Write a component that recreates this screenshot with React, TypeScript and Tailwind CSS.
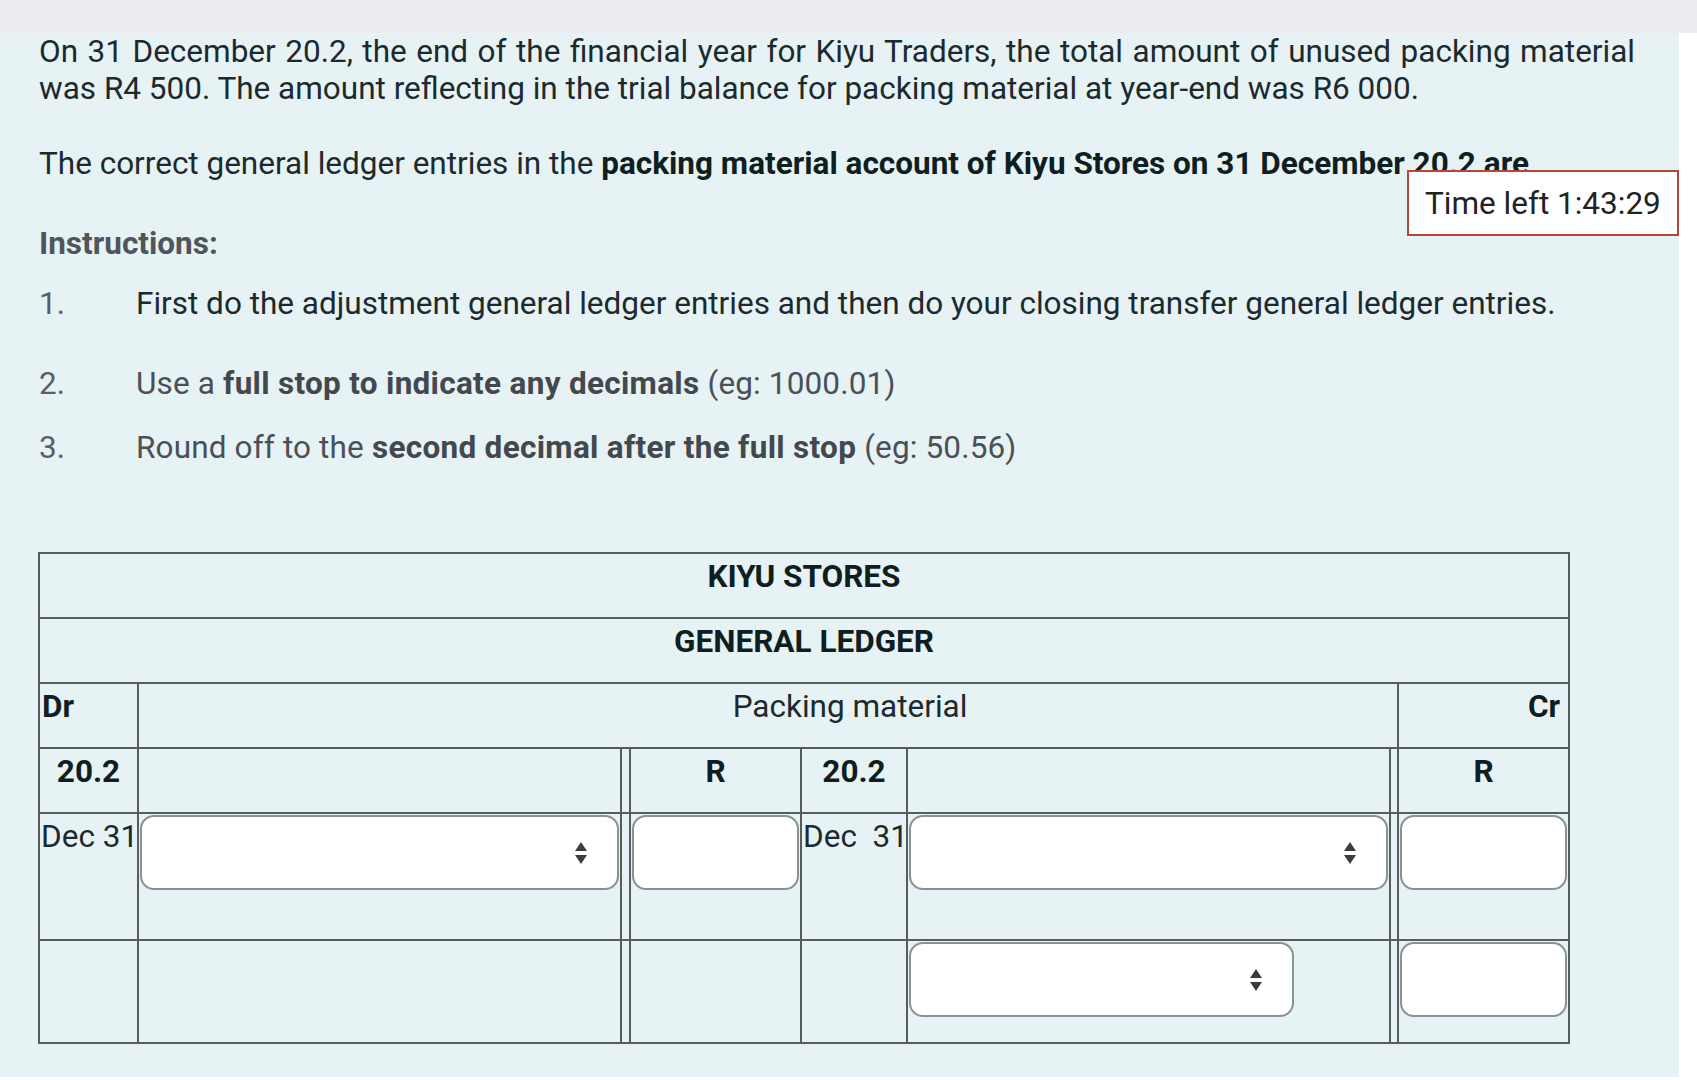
import React from 'react';

const Arrows: React.FC = () => (
  <svg
    width="12"
    height="22"
    viewBox="0 0 12 22"
    className="pointer-events-none absolute right-[32px] top-1/2 -translate-y-1/2"
  >
    <path d="M6 0 L12 9 H0 Z" fill="#3a3e41" />
    <path d="M0 13 H12 L6 22 Z" fill="#3a3e41" />
  </svg>
);

const Dropdown: React.FC<{ className?: string }> = ({ className = '' }) => (
  <div className={`relative h-[75px] ${className}`}>
    <select className="h-full w-full appearance-none rounded-[14px] border-2 border-[#8c9194] bg-white" />
    <Arrows />
  </div>
);

const Amount: React.FC = () => (
  <input
    type="text"
    className="block h-[75px] w-full rounded-[14px] border-2 border-[#8c9194] bg-white"
  />
);

const cell = 'border-2 border-[#575c5f] align-top';

const App: React.FC = () => {
  return (
    <div className="h-[1080px] w-full overflow-hidden bg-white font-['Roboto',sans-serif] text-[31.5px] leading-[37px] text-[#1d2a2d]">
      {/* top bar */}
      <div className="h-[33px] bg-[#ececf0]" />

      <div className="relative h-[1044px] w-[1679px] bg-[#e6f2f4] pl-[39px] pr-[44px]">
        <p className="text-justify">
          On 31 December 20.2, the end of the financial year for Kiyu Traders, the total amount of unused packing material
          was R4 500. The amount reflecting in the trial balance for packing material at year-end was R6 000.
        </p>

        <p className="mt-[38px] whitespace-nowrap">
          The correct general ledger entries in the{' '}
          <span className="font-bold text-[#0f1e21]">packing material account of Kiyu Stores on 31 December 20.2 are</span>
        </p>

        {/* timer */}
        <div className="absolute right-0 top-[137px] flex h-[66px] w-[272px] items-center border-2 border-[#b4463a] bg-white pl-[16px] text-[#222]">
          Time left 1:43:29
        </div>

        <h3 className="mt-[43px] font-bold text-[#4f555a]">Instructions:</h3>

        <div className="mt-[23px] flex">
          <span className="w-[97px] shrink-0 text-[#5a5f63]">1.</span>
          <span className="whitespace-nowrap text-[#1d2a2d]">
            First do the adjustment general ledger entries and then do your closing transfer general ledger entries.
          </span>
        </div>

        <div className="mt-[43px] flex text-[#4a5055]">
          <span className="w-[97px] shrink-0 text-[#5a5f63]">2.</span>
          <span className="tracking-[0.15px]">
            Use a <b className="tracking-[0.3px] text-[#43484d]">full stop to indicate any decimals</b> (eg: 1000.01)
          </span>
        </div>

        <div className="mt-[27px] flex text-[#4a5055]">
          <span className="w-[97px] shrink-0 text-[#5a5f63]">3.</span>
          <span className="tracking-[0.15px]">
            Round off to the <b className="tracking-[0.3px] text-[#43484d]">second decimal after the full stop</b> (eg: 50.56)
          </span>
        </div>

        {/* ledger */}
        <table className="-ml-px mt-[86px] w-[1530px] table-fixed border-collapse">
          <colgroup>
            <col className="w-[99px]" />
            <col className="w-[483px]" />
            <col className="w-[9px]" />
            <col className="w-[171px]" />
            <col className="w-[106px]" />
            <col className="w-[483px]" />
            <col className="w-[8px]" />
            <col className="w-[171px]" />
          </colgroup>
          <tbody className="text-[#0f1e21]">
            <tr className="h-[65px]">
              <td colSpan={8} className={`${cell} pt-[4px] text-center font-bold`}>
                KIYU STORES
              </td>
            </tr>
            <tr className="h-[65px]">
              <td colSpan={8} className={`${cell} pt-[4px] text-center font-bold`}>
                GENERAL LEDGER
              </td>
            </tr>
            <tr className="h-[65px]">
              <td className={`${cell} pl-[2px] pt-[4px] font-bold`}>Dr</td>
              <td colSpan={6} className={`${cell} pl-[164px] pt-[4px] text-center text-[#1d2a2d]`}>
                Packing material
              </td>
              <td className={`${cell} pr-[8px] pt-[4px] text-right font-bold`}>Cr</td>
            </tr>
            <tr className="h-[65px]">
              <td className={`${cell} pt-[4px] text-center font-bold`}>20.2</td>
              <td className={cell} />
              <td className={cell} />
              <td className={`${cell} pt-[4px] text-center font-bold`}>R</td>
              <td className={`${cell} pt-[4px] text-center font-bold`}>20.2</td>
              <td className={cell} />
              <td className={cell} />
              <td className={`${cell} pt-[4px] text-center font-bold`}>R</td>
            </tr>
            <tr className="h-[127px]">
              <td className={`${cell} pl-[1px] pt-[4px] text-[#1d2a2d] whitespace-nowrap`}>Dec 31</td>
              <td className={`${cell} p-[1px]`}>
                <Dropdown />
              </td>
              <td className={cell} />
              <td className={`${cell} p-[1px]`}>
                <Amount />
              </td>
              <td className={`${cell} pl-[1px] pt-[4px] text-[#1d2a2d] whitespace-pre`}>Dec  31</td>
              <td className={`${cell} p-[1px]`}>
                <Dropdown />
              </td>
              <td className={cell} />
              <td className={`${cell} p-[1px]`}>
                <Amount />
              </td>
            </tr>
            <tr className="h-[103px]">
              <td className={cell} />
              <td className={cell} />
              <td className={cell} />
              <td className={cell} />
              <td className={cell} />
              <td className={`${cell} p-[1px]`}>
                <Dropdown className="w-[385px]" />
              </td>
              <td className={cell} />
              <td className={`${cell} p-[1px]`}>
                <Amount />
              </td>
            </tr>
          </tbody>
        </table>
      </div>
    </div>
  );
};

export default App;
